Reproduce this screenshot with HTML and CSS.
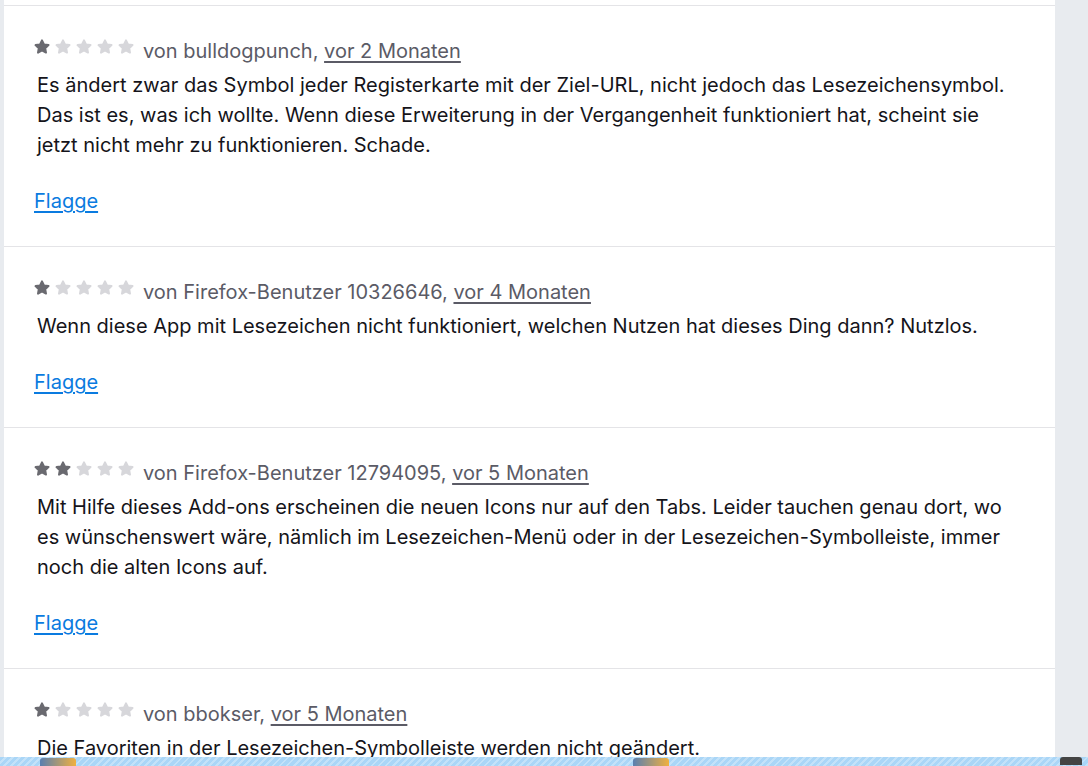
FILE: index.html
```html
<!DOCTYPE html>
<html>
<head>
    <title>Bewertungen</title>
    <link rel="stylesheet" href="styles.css">
</head>
<body>
    <svg width="0" height="0" class="defs">
        <defs>
            <path id="star" d="M8 1.4 L10 5.5 L14.5 6.1 L11.2 9.2 L12 13.6 L8 11.4 L4 13.6 L4.8 9.2 L1.5 6.1 L6 5.5 Z"/>
        </defs>
    </svg>

    <div class="reviews">
        <section class="review">
            <div class="review-header">
                <span class="stars">
                    <svg class="star on" viewBox="0 0 16 16"><use href="#star"/></svg>
                    <svg class="star" viewBox="0 0 16 16"><use href="#star"/></svg>
                    <svg class="star" viewBox="0 0 16 16"><use href="#star"/></svg>
                    <svg class="star" viewBox="0 0 16 16"><use href="#star"/></svg>
                    <svg class="star" viewBox="0 0 16 16"><use href="#star"/></svg>
                </span>
                <span class="byline">von bulldogpunch, <a href="#">vor 2 Monaten</a></span>
            </div>
            <p class="review-body">Es ändert zwar das Symbol jeder Registerkarte mit der Ziel-URL, nicht jedoch das Lesezeichensymbol. Das ist es, was ich wollte. Wenn diese Erweiterung in der Vergangenheit funktioniert hat, scheint sie jetzt nicht mehr zu funktionieren. Schade.</p>
            <a href="#" class="flag">Flagge</a>
        </section>

        <section class="review">
            <div class="review-header">
                <span class="stars">
                    <svg class="star on" viewBox="0 0 16 16"><use href="#star"/></svg>
                    <svg class="star" viewBox="0 0 16 16"><use href="#star"/></svg>
                    <svg class="star" viewBox="0 0 16 16"><use href="#star"/></svg>
                    <svg class="star" viewBox="0 0 16 16"><use href="#star"/></svg>
                    <svg class="star" viewBox="0 0 16 16"><use href="#star"/></svg>
                </span>
                <span class="byline">von Firefox-Benutzer 10326646, <a href="#">vor 4 Monaten</a></span>
            </div>
            <p class="review-body">Wenn diese App mit Lesezeichen nicht funktioniert, welchen Nutzen hat dieses Ding dann? Nutzlos.</p>
            <a href="#" class="flag">Flagge</a>
        </section>

        <section class="review">
            <div class="review-header">
                <span class="stars">
                    <svg class="star on" viewBox="0 0 16 16"><use href="#star"/></svg>
                    <svg class="star on" viewBox="0 0 16 16"><use href="#star"/></svg>
                    <svg class="star" viewBox="0 0 16 16"><use href="#star"/></svg>
                    <svg class="star" viewBox="0 0 16 16"><use href="#star"/></svg>
                    <svg class="star" viewBox="0 0 16 16"><use href="#star"/></svg>
                </span>
                <span class="byline">von Firefox-Benutzer 12794095, <a href="#">vor 5 Monaten</a></span>
            </div>
            <p class="review-body">Mit Hilfe dieses Add-ons erscheinen die neuen Icons nur auf den Tabs. Leider tauchen genau dort, wo es wünschenswert wäre, nämlich im Lesezeichen-Menü oder in der Lesezeichen-Symbolleiste, immer noch die alten Icons auf.</p>
            <a href="#" class="flag">Flagge</a>
        </section>

        <section class="review">
            <div class="review-header">
                <span class="stars">
                    <svg class="star on" viewBox="0 0 16 16"><use href="#star"/></svg>
                    <svg class="star" viewBox="0 0 16 16"><use href="#star"/></svg>
                    <svg class="star" viewBox="0 0 16 16"><use href="#star"/></svg>
                    <svg class="star" viewBox="0 0 16 16"><use href="#star"/></svg>
                    <svg class="star" viewBox="0 0 16 16"><use href="#star"/></svg>
                </span>
                <span class="byline">von bbokser, <a href="#">vor 5 Monaten</a></span>
            </div>
            <p class="review-body last">Die Favoriten in der Lesezeichen-Symbolleiste werden nicht geändert.</p>
        </section>
    </div>

    <!-- desktop taskbar peeking in at the bottom -->
    <div class="taskbar">
        <span class="tb-icon tb-orange" style="left: 40px"></span>
        <span class="tb-icon tb-orange" style="left: 633px"></span>
        <span class="tb-icon tb-dark" style="left: 1060px"></span>
    </div>
</body>
</html>
```

FILE: styles.css
```css
html, body {
    margin: 0;
    padding: 0;
}
body {
    background-color: #e8ebef;
    font-family: Inter, "Noto Sans", sans-serif;
    color: #15141a;
    height: 766px;
    overflow: hidden;
}
.defs {
    position: absolute;
}
.reviews {
    margin-left: 4px;
    width: 1051px;
    background-color: #fff;
    padding-top: 5px;
}
.review {
    border-top: 1px solid #e4e4e7;
    padding: 26px 30px 30px;
}
/* stars sit a little higher than the byline text */
.review-header {
    display: flex;
    align-items: flex-end;
    gap: 9px;
    height: 34px;
}
.stars {
    display: flex;
    gap: 5px;
    margin-bottom: 11px;
}
.star {
    width: 16px;
    height: 16px;
    fill: #d7d7db;
    stroke: #d7d7db;
    stroke-width: 2;
    stroke-linejoin: round;
}
.star.on {
    fill: #6a6a70;
    stroke: #6a6a70;
}
.byline {
    font-size: 20px;
    color: #5b5b66;
    line-height: 30px;
}
.byline a {
    color: #5b5b66;
    text-decoration: underline;
    text-underline-offset: 3px;
}
.review-body {
    margin: 4px 0 26px;
    padding-left: 3px;
    font-size: 20px;
    line-height: 30px;
}
.review-body.last {
    margin-bottom: 0;
}
.flag {
    display: inline-block;
    font-size: 20px;
    line-height: 30px;
    color: #0a7be0;
    text-decoration: underline;
    text-underline-offset: 3px;
}
/* Taskbar strip */
.taskbar {
    position: fixed;
    left: 0;
    right: 0;
    bottom: 0;
    height: 9px;
    background: repeating-linear-gradient(135deg, #aad6f7 0 3px, #c3e2f9 3px 5px);
}
.tb-icon {
    position: absolute;
    top: 1px;
    width: 36px;
    height: 8px;
    border-radius: 3px 3px 0 0;
}
.tb-orange {
    background: linear-gradient(90deg, #5a7fb0, #f0b040);
}
.tb-dark {
    width: 22px;
    top: 0;
    background: #444;
}
```
